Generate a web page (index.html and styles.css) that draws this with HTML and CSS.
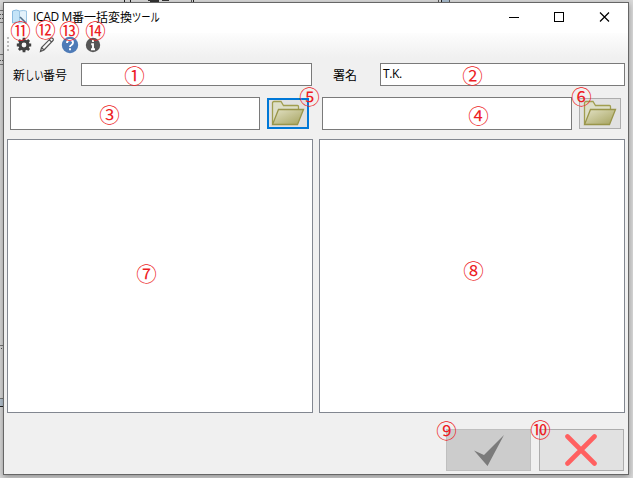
FILE: index.html
```html
<!DOCTYPE html>
<html lang="ja">
<head>
<meta charset="utf-8">
<title>ICAD M番一括変換ツール</title>
<link rel="stylesheet" href="styles.css">
</head>
<body>
<svg class="backdrop" width="633" height="478" viewBox="0 0 633 478" shape-rendering="crispEdges">
  <path d="M124 0v2M130 0v2M126 2h5M193 0v2M441 0v2" stroke="#222"/>
  <path d="M148 0h11M150 1h9M162 0h7" stroke="#333"/>
  <path d="M191.500 0v2M438.500 0v2M449.500 0v2" stroke="#555"/>
  <path d="M442 0h7v2h-7z" fill="#a9bccd"/>
  <path d="M0 10.500h3M0 22.500h3M0 54.500h3M0 64.500h3M0 345.500h3M0 398.500h3" stroke="#777"/>
  <path d="M0 14.500h3M0 18.500h3M0 60.500h3M1 348.500h3" stroke="#555" stroke-dasharray="1 1"/>
  <path d="M0 399h3v7H0z" fill="#b5c3d0"/><path d="M0 406.500h3" stroke="#222"/>
</svg>
<svg class="defs" width="0" height="0">
  <defs>
    <linearGradient id="fold" x1="0" y1="0" x2="1" y2="1"><stop offset="0" stop-color="#e3e2c5"/><stop offset="1" stop-color="#a5a25e"/></linearGradient>
    <symbol id="folder" viewBox="0 0 34 26">
      <path d="M1.500 24V3Q1.500 1.500 3 1.500h7l2.500 4h14q1 0 1 1V10" fill="#dedfc8" stroke="#a19e50" stroke-width="1.300"/>
      <path d="M7.500 9.500H32.500L26.500 24.500H1.500z" fill="url(#fold)" stroke="#99954a" stroke-width="1.300"/>
    </symbol>
  </defs>
</svg>
<div class="window">
  <header class="titlebar">
    <svg class="appicon" width="18" height="17" viewBox="0 0 18 17">
      <path d="M1.500 2q4-2 7 0v12q-3-2-7 0z" fill="#c4e4f8" stroke="#8abbe0"/>
      <path d="M8.500 2q4-1 7 0v12q-3-1-7 0z" fill="#e4f2fb" stroke="#9cc6e4"/>
      <path d="M9 8l6 6" stroke="#526d87" stroke-width="1.600"/>
    </svg>
    <h1 class="title"><span class="latin">ICAD M</span>番一括変換<span class="kana">ツール</span></h1>
    <svg class="controls" width="120" height="20" viewBox="0 0 120 20" fill="none" stroke="#000">
      <path d="M6 10.500h10M51.500 5.500h9v9h-9z" shape-rendering="crispEdges"/>
      <path d="M97 5.500l9 9M106 5.500l-9 9" stroke-width="1.200"/>
    </svg>
  </header>
  <nav class="toolbar">
    <span class="grip"></span>
    <svg width="16" height="16" viewBox="0 0 16 16">
      <circle cx="8" cy="8" r="4" fill="none" stroke="#414141" stroke-width="3.200"/>
      <path d="M8 .8v3M8 12.200v3M.8 8h3M12.200 8h3M2.900 2.900l2 2M11.100 11.100l2 2M13.100 2.900l-2 2M4.900 11.100l-2 2" stroke="#414141" stroke-width="2.800"/>
    </svg>
    <svg width="16" height="16" viewBox="0 0 16 16" fill="none" stroke="#555" stroke-width="1.200">
      <path d="M1.500 14.500l1-4L11.800 1.200q1.100-.6 2 .3t.3 2L5 13zM10.200 2.800l2.800 2.600M2.500 10.500L5 13"/>
    </svg>
    <svg width="18" height="18" viewBox="0 0 18 18">
      <circle cx="9" cy="9" r="8.200" fill="#4e7bb7"/>
      <path d="M6 7q0-3 3-3t3 2.500Q12 8 10.500 9 9 9.800 9 11M9 12.200v2" fill="none" stroke="#fff" stroke-width="1.900"/>
    </svg>
    <svg width="16" height="16" viewBox="0 0 16 16">
      <circle cx="8" cy="8" r="7.200" fill="#575757"/>
      <path d="M8 3v2M6.200 7.200H8V12M6 12.200h4" fill="none" stroke="#fff" stroke-width="1.900"/>
    </svg>
  </nav>
  <main class="columns">
    <section class="column">
      <div class="field"><label>新<span class="kana">しい</span>番号</label><div class="input number"></div></div>
      <div class="path"><div class="input"></div><button class="browse focused"><svg width="34" height="26"><use href="#folder"/></svg></button></div>
      <div class="list"></div>
    </section>
    <section class="column">
      <div class="field"><label class="sign">署名</label><div class="input signature">T.K.</div></div>
      <div class="path"><div class="input"></div><button class="browse"><svg width="34" height="26"><use href="#folder"/></svg></button></div>
      <div class="list"></div>
    </section>
  </main>
  <footer class="actions">
    <button class="ok"><svg width="32" height="34" viewBox="0 0 32 34"><path d="M1 17.500L11 22 31 2 14.500 33z" fill="#7b7b7b"/></svg></button>
    <button class="cancel"><svg width="32" height="32" viewBox="0 0 32 32"><path d="M2.500 2.500l27 27M29.500 2.500l-27 27" stroke="#ff6060" stroke-width="4.600" stroke-linecap="round"/></svg></button>
  </footer>
</div>
<div class="notes">
  <span class="n1">①</span><span class="n2">②</span><span class="n3">③</span><span class="n4">④</span><span class="n5">⑤</span><span class="n6">⑥</span><span class="n7">⑦</span><span class="n8">⑧</span><span class="n9">⑨</span><span class="n10">⑩</span><span class="n11">⑪</span><span class="n12">⑫</span><span class="n13">⑬</span><span class="n14">⑭</span>
</div>
</body>
</html>
```
FILE: styles.css
```css
* { box-sizing: border-box; }
body {
  margin: 0;
  width: 633px;
  height: 478px;
  padding: 2px 0 0 3px;
  overflow: hidden;
  position: relative;
  background: #d9d9d9;
  font: 12px/16px "Noto Sans CJK JP", sans-serif;
  color: #000;
}
svg { display: block; flex: none; }
.backdrop { position: absolute; left: 0; top: 0; }
.defs { position: absolute; }
.window {
  position: relative;
  width: 626px;
  height: 473px;
  border: 1px solid #666;
  background: #f0f0f0;
  box-shadow: 0 2px 6px rgba(0, 0, 0, .35);
}
.titlebar { height: 30px; display: flex; align-items: center; padding: 0 5px 2px 7px; background: #fff; }
.title { margin: 0 auto 0 4px; font-size: 12px; font-weight: 400; white-space: nowrap; display: flex; }
.latin { font-family: "Open Sans", sans-serif; letter-spacing: -.35px; }
.kana { display: inline-block; transform: scaleX(.77); transform-origin: 0 50%; }
label .kana { margin-right: -6px; }
.toolbar {
  height: 25px;
  display: flex;
  align-items: center;
  padding: 0 0 2px 3px;
  background: linear-gradient(#fdfdfd, #f0f0f0);
}
.toolbar svg + svg { margin-left: 7px; }
.toolbar svg:nth-of-type(3), .toolbar svg:nth-of-type(4) { margin-left: 6px; }
.grip { width: 2px; height: 15px; margin-right: 7px; background: repeating-linear-gradient(#bbb 0 2px, transparent 2px 4px); }
.columns { display: grid; grid-template-columns: 306px 306px; gap: 6px; padding: 5px 0 0 3px; }
.field { display: flex; height: 23px; align-items: center; padding-right: 1px; }
.column + .column .field { padding-right: 0; }
label { width: 74px; padding-left: 6px; white-space: nowrap; }
.sign { width: 61px; padding-left: 14px; }
.input { flex: 1; height: 100%; border: 1px solid #7a7a7a; background: #fff; }
.signature { padding: 1px 2px; font: 12px/17px "Open Sans", sans-serif; letter-spacing: -.4px; }
.path { display: flex; align-items: center; gap: 7px; height: 33px; margin-top: 11px; padding: 0 4px 0 3px; }
.list { height: 274px; margin-top: 9px; border: 1px solid #828790; background: #fff; }
button { display: flex; align-items: center; justify-content: center; padding: 0; border: 1px solid #adadad; border-radius: 0; background: #e1e1e1; }
.browse { width: 42px; height: 31px; padding-bottom: 1px; }
.focused { border: 2px solid #0078d7; }
.actions { display: flex; justify-content: flex-end; gap: 8px; padding: 16px 4px 0 0; }
.actions button { width: 85px; height: 42px; }
.actions .ok { border-color: #bfbfbf; background: #ccc; }
.actions .cancel { padding-right: 1px; }
.notes span {
  position: absolute;
  width: 22px;
  height: 22px;
  margin: -11px 0 0 -11px;
  font-size: 20.5px;
  line-height: 22px;
  text-align: center;
  color: #ed1c24;
}
.n1 { left: 134.500px; top: 75px; }
.n2 { left: 472.500px; top: 75px; }
.n3 { left: 109.500px; top: 114px; }
.n4 { left: 478.500px; top: 115px; }
.n5 { left: 309.500px; top: 96px; }
.n6 { left: 581.500px; top: 96px; }
.n7 { left: 146.500px; top: 273px; }
.n8 { left: 473.500px; top: 270px; }
.n9 { left: 446.500px; top: 430px; }
.n10 { left: 540.500px; top: 429px; }
.n11 { left: 20.500px; top: 30px; }
.n12 { left: 45.500px; top: 29px; }
.n13 { left: 69.500px; top: 30px; }
.n14 { left: 95.500px; top: 30px; }
```
